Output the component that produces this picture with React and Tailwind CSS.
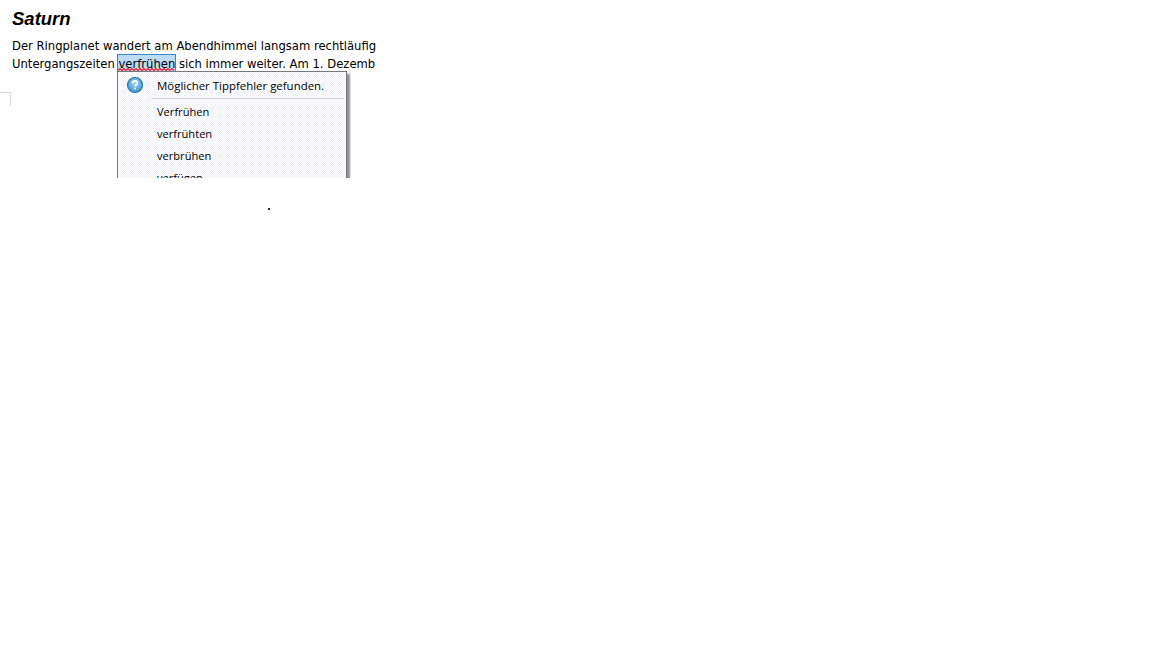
const suggestions = ["Verfrühen", "verfrühten", "verbrühen", "verfügen"];

const HelpIcon = () => (
  <svg width="18" height="18" viewBox="0 0 18 18">
    <defs>
      <radialGradient id="help" cx="50%" cy="40%" r="60%">
        <stop offset="0%" stopColor="#a8d8f5" />
        <stop offset="100%" stopColor="#3f8fd0" />
      </radialGradient>
    </defs>
    <circle cx="9" cy="9" r="7.5" fill="url(#help)" stroke="#2a74b5" strokeWidth="1.2" />
    <path d="M6.6 7.2c0-1.5 1.1-2.3 2.5-2.3s2.4.8 2.4 2c0 1.7-2.3 1.7-2.3 3.4" fill="none" stroke="#fff" strokeWidth="1.6" />
    <rect x="8.2" y="11.6" width="1.7" height="1.7" fill="#fff" />
  </svg>
);

// red spell-check squiggle under the misspelled word
const Squiggle = () => (
  <svg className="absolute bottom-[2px] left-0 z-10" width="57" height="3" viewBox="0 0 57 3">
    <path
      d="M0 2.5 L2 .5 L4 2.5 L6 .5 L8 2.5 L10 .5 L12 2.5 L14 .5 L16 2.5 L18 .5 L20 2.5 L22 .5 L24 2.5 L26 .5 L28 2.5 L30 .5 L32 2.5 L34 .5 L36 2.5 L38 .5 L40 2.5 L42 .5 L44 2.5 L46 .5 L48 2.5 L50 .5 L52 2.5 L54 .5 L56 2.5"
      fill="none"
      stroke="#f01828"
      strokeWidth="1.1"
    />
  </svg>
);

const SpellMenu = () => (
  <div className="absolute left-[117px] top-[71px] h-[107px] w-[234px] overflow-hidden">
    <div className="h-[140px] w-[230px] border border-[#77777f] bg-[repeating-conic-gradient(#f1f1f8_0_25%,#ffffff_0_50%)] bg-[length:2px_2px] shadow-[3px_3px_2px_rgba(90,90,100,0.7)] font-['Open_Sans','Noto_Sans',sans-serif] text-[11.1px] text-black">
      <div className="flex h-[26px] items-center">
        <div className="flex w-[33px] justify-center">
          <HelpIcon />
        </div>
        <span className="pl-[6px] pt-[2px] text-[11.45px]">Möglicher Tippfehler gefunden.</span>
      </div>
      <div className="ml-[33px] mr-[2px] border-t border-[#d4d4d8]" />
      <div className="mt-[2px] flex flex-col pl-[39px]">
        {suggestions.map((word) => (
          <div key={word} className="flex h-[22px] items-center">{word}</div>
        ))}
      </div>
    </div>
  </div>
);

export default function App() {
  return (
    <div className="relative h-[648px] w-[1152px] overflow-hidden bg-white">
      <div className="pl-3 pt-[8px]">
        <h1 className="font-['Liberation_Sans',sans-serif] text-[18.5px] leading-[22px] font-bold italic text-black">Saturn</h1>
        <div className="mt-[7px] w-[366px] overflow-hidden whitespace-nowrap font-['DejaVu_Sans',sans-serif] text-[11.6px] leading-[18px] text-black">
          <p>Der Ringplanet wandert am Abendhimmel langsam rechtläufig</p>
          <p>
            Untergangszeiten{" "}
            <span className="relative inline-block bg-[#bcdcf5] shadow-[0_0_0_1px_#3c84c8]">
              verfrühen
              <Squiggle />
            </span>{" "}
            sich immer weiter. Am 1. Dezemb
          </p>
        </div>
      </div>
      <div className="mt-[19px] h-[14px] w-[11px] border-t border-r border-[#e6d0e0]" />
      <div className="ml-[268px] mt-[102px] h-[2px] w-[2px] bg-[#222233]" />
      <SpellMenu />
    </div>
  );
}
